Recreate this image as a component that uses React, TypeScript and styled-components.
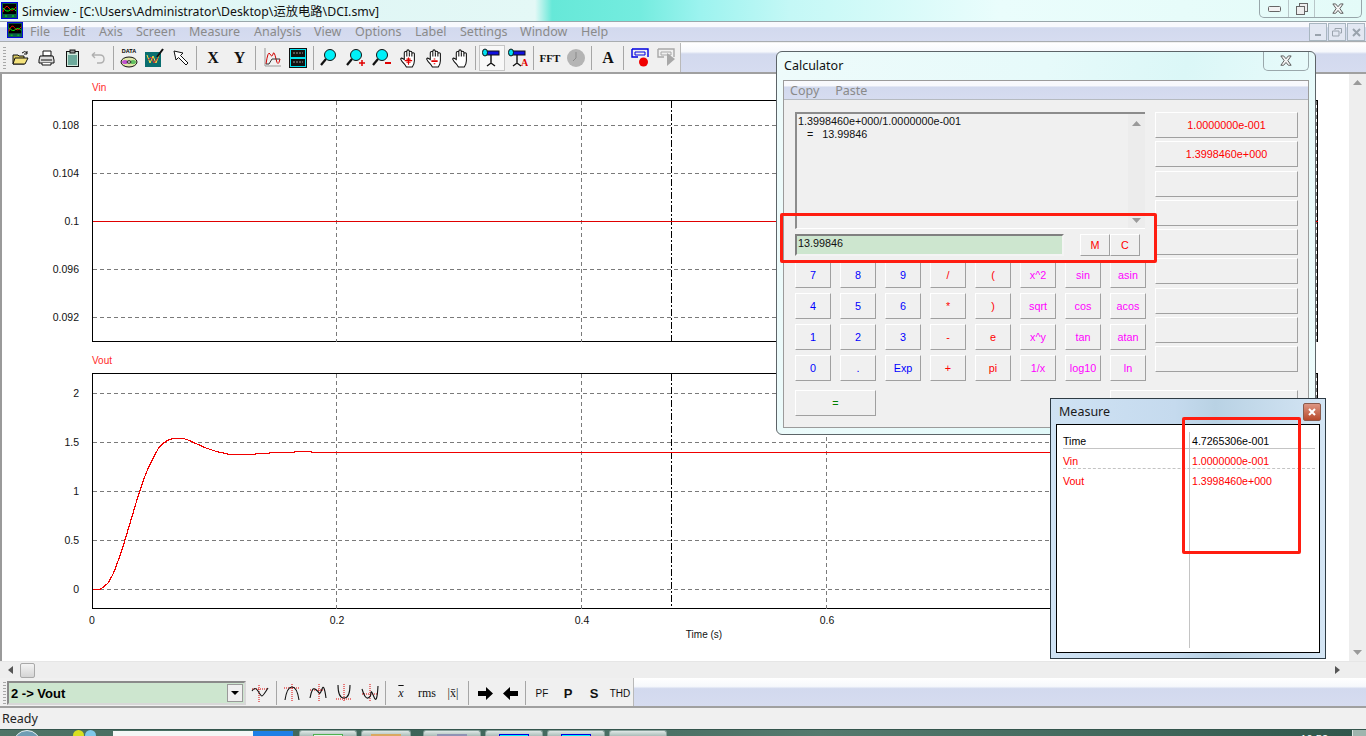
import React from "react";
import styled, { createGlobalStyle } from "styled-components";

const GlobalStyle = createGlobalStyle`
  html, body {
    margin: 0;
    padding: 0;
    overflow: hidden;
    background: #f0f0f0;
  }
  * {
    box-sizing: border-box;
  }
`;

const Page = styled.div`
  position: relative;
  width: 1366px;
  height: 736px;
  overflow: hidden;
  display: flex;
  flex-direction: column;
  background: #f0f0f0;
  font-family: "Liberation Sans", Arial, sans-serif;
  font-size: 11px;
`;

const TitleBar = styled.div`
  height: 22px;
  flex: none;
  display: flex;
  align-items: center;
  padding-left: 1px;
  gap: 4px;
  font-family: "Noto Sans", "Noto Sans CJK SC", sans-serif;
  font-size: 12.3px;
  color: #111;
  border-bottom: 1px solid #9aa7ab;
  background: linear-gradient(90deg, #e6f9f7 0, #dff6f5 300px, #e4f8f6 535px, #66e8d8 552px, #74ecdf 640px, #9cf3ef 700px, #c4f8f6 790px, #eafdfc 1000px, #e4fbf8 100%);
`;

const WindowButtons = styled.div`
  position: absolute;
  top: 0;
  right: 4px;
  width: 103px;
  height: 18px;
  display: grid;
  grid-template-columns: 28px 26px 1fr;
  border: 1px solid #98a6aa;
  border-top: 0;
  border-radius: 0 0 5px 5px;
  color: #444;
  > div {
    display: flex;
    align-items: center;
    justify-content: center;
  }
  > div + div {
    border-left: 1px solid #b8c6c8;
  }
`;

const MenuBar = styled.div`
  height: 20px;
  flex: none;
  display: flex;
  align-items: center;
  padding-left: 7px;
  font-family: "Noto Sans", sans-serif;
  font-size: 12.5px;
  color: #8a8a8a;
  border-bottom: 1px solid #a9adb0;
  background: linear-gradient(180deg, #f8f9fd 0%, #f8f9fd 25%, #d2d9ee 30%, #d6dcf0 100%);
`;

const MenuItem = styled.span<{ $w: number }>`
  width: ${(p) => p.$w}px;
  flex: none;
  white-space: nowrap;
`;

const MdiButtons = styled.div`
  margin-left: auto;
  display: flex;
  gap: 1px;
  padding-right: 1px;
`;

const MdiButton = styled.div`
  width: 18px;
  height: 18px;
  margin-top: 1px;
  border: 1px solid #a8b6c0;
  background: #e2e7f2;
  display: flex;
  align-items: center;
  justify-content: center;
`;

const BarStrip = styled.div`
  flex: none;
  display: flex;
  align-items: center;
  background: linear-gradient(180deg, #ffffff 0%, #f6f8fc 30%, #d2d9ee 38%, #d6dcf0 100%);
  border-bottom: 2px solid #a0a0a0;
`;

const ToolBar = styled(BarStrip)`
  height: 31px;
  margin-top: 1px;
`;

const ToolGroup = styled.div`
  height: 100%;
  display: flex;
  align-items: center;
  background: #f0f0f0;
  padding-left: 3px;
  border-right: 1px solid #b9b9b9;
`;

const BottomGroup = styled(ToolGroup)`
  padding-top: 2px;
`;

const Grip = styled.div`
  width: 3px;
  height: 22px;
  margin-right: 1px;
  flex: none;
  background: repeating-linear-gradient(180deg, #a8a8a8 0 1px, transparent 1px 3px);
`;

const ToolButton = styled.div<{ $w?: number; $pressed?: boolean }>`
  width: ${(p) => p.$w ?? 26}px;
  height: 26px;
  flex: none;
  display: flex;
  align-items: center;
  justify-content: center;
  color: #111;
  background: ${(p) => (p.$pressed ? "#f8f8f8" : "transparent")};
  border: ${(p) => (p.$pressed ? "1px solid #c6c6c6" : "1px solid transparent")};
`;

const ToolSep = styled.div<{ $wide?: boolean }>`
  width: 1px;
  height: 24px;
  margin: 0 ${(p) => (p.$wide ? 3 : 2)}px 0 2px;
  flex: none;
  background: #a6a6a6;
`;

const SerifGlyph = styled.span<{ $size?: number; $thin?: boolean; $italic?: boolean; $over?: boolean }>`
  font-family: "Liberation Serif", serif;
  font-weight: ${(p) => (p.$thin ? 400 : 700)};
  font-style: ${(p) => (p.$italic ? "italic" : "normal")};
  text-decoration: ${(p) => (p.$over ? "overline" : "none")};
  font-size: ${(p) => p.$size ?? 16}px;
  color: #111;
`;

const PlainGlyph = styled.span<{ $bold?: boolean; $size?: number }>`
  font-family: "Liberation Sans", sans-serif;
  font-size: ${(p) => p.$size ?? 10}px;
  font-weight: ${(p) => (p.$bold ? "bold" : "normal")};
  color: #111;
`;

const Workspace = styled.div`
  flex: none;
  height: 604px;
  display: grid;
  grid-template-columns: 1fr 17px;
  grid-template-rows: 587px 17px;
  border-left: 2px solid #9a9a9a;
`;

const Canvas = styled.div`
  background: #fff;
  overflow: hidden;
  min-width: 0;
`;

const VScroll = styled.div`
  display: flex;
  flex-direction: column;
  justify-content: space-between;
  align-items: center;
  background: #eeeeee;
  padding: 6px 0 6px;
`;

const HScroll = styled.div`
  grid-column: 1 / 3;
  display: flex;
  align-items: center;
  padding: 0 26px 0 8px;
  background: #eeeeee;
  border-top: 1px solid #e6e6e6;
  margin-left: -2px;
`;

const Thumb = styled.div`
  width: 15px;
  height: 15px;
  margin-left: 7px;
  border: 1px solid #a9a9a9;
  border-radius: 2px;
  background: linear-gradient(180deg, #f4f4f4, #d4d4d4);
`;

const BottomBar = styled(BarStrip)`
  height: 30px;
`;

const ComboBox = styled.div`
  width: 239px;
  height: 24px;
  flex: none;
  display: flex;
  align-items: center;
  justify-content: space-between;
  padding: 0 1px 0 2px;
  background: #cde6cf;
  border: 2px solid #8a8a8a;
  border-right-color: #d8d8d8;
  border-bottom-color: #d8d8d8;
  font-family: "Liberation Sans", sans-serif;
  font-weight: bold;
  font-size: 13px;
  color: #000;
`;

const ComboArrow = styled.div`
  width: 16px;
  height: 18px;
  background: #f0f0f0;
  border: 1px solid #9a9a9a;
  display: flex;
  align-items: center;
  justify-content: center;
`;

const StatusBar = styled.div`
  height: 21px;
  flex: none;
  display: flex;
  align-items: center;
  padding-left: 2px;
  font-family: "Noto Sans", sans-serif;
  font-size: 12.5px;
  color: #222;
  background: #f0f0f0;
`;

const TaskBar = styled.div`
  height: 7px;
  flex: none;
  display: flex;
  border-top: 1px solid #33544c;
  background: linear-gradient(90deg, #4f7467, #3c6458 30%, #557a6e 60%, #3f665a 85%, #2f564b 100%);
  overflow: hidden;
`;

const StartOrb = styled.div`
  width: 28px;
  height: 28px;
  margin-left: 13px;
  flex: none;
  border-radius: 50%;
  border: 1px solid #e4eef0;
  background: #6f9db4;
`;

const TrayDot = styled.div<{ $c: string; $ml: number }>`
  width: 11px;
  height: 11px;
  margin-left: ${(p) => p.$ml}px;
  flex: none;
  border-radius: 50%;
  background: ${(p) => p.$c};
`;

const SearchBox = styled.div`
  width: 180px;
  margin: 1px 0 0 17px;
  flex: none;
  background: linear-gradient(90deg, #f4f7f6 0, #f4f7f6 140px, #1e7fe6 140px, #1e7fe6 100%);
`;

const TaskItem = styled.div<{ $w: number; $ml: number }>`
  width: ${(p) => p.$w}px;
  margin-left: ${(p) => p.$ml}px;
  flex: none;
  display: flex;
  justify-content: center;
  background: linear-gradient(180deg, #dfe8e6, #a9bdb8);
  border: 1px solid #86a09a;
  border-bottom: 0;
  border-radius: 3px 3px 0 0;
`;

const TaskGlyph = styled.div<{ $c: string; $edge?: string }>`
  width: 30px;
  margin-top: 3px;
  background: ${(p) => p.$c};
  border: 1px solid ${(p) => p.$edge ?? "transparent"};
  border-bottom: 0;
`;

const TrayClock = styled.div`
  margin-left: auto;
  padding-top: 3px;
  flex: none;
  font-size: 11px;
  line-height: 13px;
  color: #fff;
`;

const ShowDesktop = styled.div`
  width: 14px;
  margin-left: 24px;
  flex: none;
  background: #9fb5ae;
  border-left: 1px solid #dbe6e3;
`;

const Calculator = styled.div`
  position: absolute;
  left: 776px;
  top: 51px;
  width: 540px;
  height: 384px;
  border: 1px solid #5d6468;
  border-radius: 6px 6px 0 6px;
  background: linear-gradient(100deg, #eefbfb 0%, #e6fafa 45%, #dbf7f7 68%, #eefcfc 100%);
  padding: 0 6px 6px 6px;
  display: flex;
  flex-direction: column;
`;

const CalcTitle = styled.div`
  height: 28px;
  flex: none;
  display: flex;
  align-items: center;
  justify-content: space-between;
  font-family: "Noto Sans", sans-serif;
  font-size: 12.5px;
  color: #111;
  padding: 0 0 2px 1px;
`;

const CalcClose = styled.div`
  width: 46px;
  height: 19px;
  align-self: flex-start;
  display: flex;
  align-items: center;
  justify-content: center;
  border: 1px solid #9aa7ab;
  border-top: 0;
  border-radius: 0 0 5px 5px;
`;

const CalcBody = styled.div`
  flex: 1;
  border: 1px solid #9b9b9b;
  background: #f0f0f0;
  display: flex;
  flex-direction: column;
`;

const CalcMenu = styled.div`
  height: 19px;
  flex: none;
  display: flex;
  align-items: center;
  gap: 16px;
  padding-left: 6px;
  font-family: "Noto Sans", sans-serif;
  font-size: 12.5px;
  color: #8a8a8a;
  border-bottom: 1px solid #b5bac0;
  background: linear-gradient(180deg, #f8f9fd 0%, #f8f9fd 25%, #d2d9ee 35%, #d6dcf0 100%);
`;

const CalcColumns = styled.div`
  flex: 1;
  display: grid;
  grid-template-columns: 351px 143px;
  column-gap: 9px;
  align-content: start;
  padding: 12px 0 0 11px;
`;

const CalcLeft = styled.div`
  display: flex;
  flex-direction: column;
`;

const OutputBox = styled.div`
  width: 350px;
  height: 117px;
  display: flex;
  justify-content: space-between;
  border: 2px solid #8c8c8c;
  border-right: 0;
  border-bottom: 1px solid #fff;
  padding: 1px 0 0 1px;
  line-height: 13px;
  font-size: 10.8px;
  color: #111;
  white-space: pre;
`;

const OutputScroll = styled.div`
  width: 17px;
  display: flex;
  flex-direction: column;
  align-items: center;
  justify-content: space-between;
  padding: 7px 0 5px;
  background: #ececec;
  margin-top: -1px;
`;

const EntryRow = styled.div`
  height: 22px;
  margin-top: 5px;
  display: flex;
  align-items: center;
`;

const EntryField = styled.div`
  width: 269px;
  height: 22px;
  flex: none;
  border: 2px solid #808080;
  border-right-color: #f4f4f4;
  border-bottom-color: #f4f4f4;
  background: #cde6cf;
  padding-left: 1px;
  line-height: 15px;
  font-size: 10.8px;
  color: #111;
`;

const CalcButton = styled.div<{ $color?: string }>`
  display: flex;
  align-items: center;
  justify-content: center;
  background: #f0f0f0;
  border: 1px solid #a0a0a0;
  border-top-color: #fff;
  border-left-color: #fff;
  color: ${(p) => p.$color ?? "#ff0000"};
  font-size: 10.8px;
`;

const MemoryButtons = styled.div`
  display: flex;
  margin-left: 16px;
  ${CalcButton} {
    width: 30px;
    height: 22px;
  }
`;

const KeyGrid = styled.div`
  margin-top: 6px;
  display: grid;
  grid-template-columns: repeat(8, 36px);
  grid-auto-rows: 26px;
  column-gap: 9px;
  row-gap: 5px;
`;

const CalcRight = styled.div`
  display: flex;
  flex-direction: column;
  gap: 3.25px;
  ${CalcButton} {
    height: 26px;
  }
`;

const CalcFooter = styled.div`
  grid-column: 1 / 3;
  margin-top: 9px;
  display: flex;
  justify-content: space-between;
  ${CalcButton} {
    height: 26px;
  }
`;

const EqualsButton = styled(CalcButton)`
  width: 81px;
`;

const WideButton = styled(CalcButton)`
  width: 188px;
`;

const MeasureWindow = styled.div`
  position: absolute;
  left: 1050px;
  top: 398px;
  width: 276px;
  height: 261px;
  border: 1px solid #2e3b44;
  background: linear-gradient(90deg, #cfe2f3 0%, #c5daee 45%, #b9d2e4 60%, #d4e5f4 100%);
  padding: 0 5px 5px 5px;
  display: flex;
  flex-direction: column;
`;

const MeasureTitle = styled.div`
  height: 25px;
  flex: none;
  display: flex;
  align-items: center;
  justify-content: space-between;
  font-family: "Noto Sans", sans-serif;
  font-size: 12.5px;
  color: #1a1a1a;
  padding-left: 3px;
`;

const MeasureClose = styled.div`
  width: 18px;
  height: 18px;
  margin-right: -1px;
  display: flex;
  align-items: center;
  justify-content: center;
  border: 1px solid #8a5a4c;
  border-radius: 2px;
  background: linear-gradient(180deg, #dd9683, #b84a2c);
`;

const MeasureBody = styled.div`
  flex: 1;
  position: relative;
  background: #fff;
  border: 1px solid #000;
  padding: 4px 4px 0 6px;
`;

const MeasureDivider = styled.div`
  position: absolute;
  left: 132px;
  top: 7px;
  bottom: 4px;
  width: 1px;
  background: #c4c4c4;
`;

const MeasureRow = styled.div<{ $color: string; $line?: string }>`
  height: 20px;
  display: grid;
  grid-template-columns: 129px 1fr;
  align-items: center;
  font-size: 10.6px;
  color: ${(p) => p.$color};
  padding-top: 4px;
  border-bottom: ${(p) => p.$line ?? "0"};
`;

const Highlight = styled.div`
  position: absolute;
  border: 3px solid #ff1d10;
  border-radius: 2px;
  pointer-events: none;
`;

const EntryHighlight = styled(Highlight)`
  left: 780px;
  top: 213px;
  width: 377px;
  height: 50px;
`;

const ValueHighlight = styled(Highlight)`
  left: 1182px;
  top: 417px;
  width: 119px;
  height: 137px;
`;

const tickStyle = { fontFamily: "'Liberation Sans', sans-serif", fontSize: 10.5, fill: "#111" };

const PLOT_L = 90.5;
const PLOT_R = 1315.5;

// step response read off the picture, in px from the plot's top left corner
const voutPoints = [
  [0, 215.7], [7.7, 215.7], [11, 213.7], [16, 209], [21, 199.7], [26, 186.3], [31, 171.3], [36, 154.7], [41, 138],
  [46, 121.3], [51, 106.3], [56, 93.7], [61, 83.7], [66, 74.7], [71, 69.7], [76, 66.3], [81, 65], [91, 65],
  [96, 66.7], [104, 70.3], [114, 74.7], [124, 78], [136, 80.7], [163, 80.7], [164, 80], [176, 80], [178, 79],
  [201, 79], [203, 78], [218, 78], [219, 78.7], [1225, 78.7],
];

function Plot({ y, h, label, ticks, line }: { y: number; h: number; label: string; ticks: { t: string; y: number }[]; line: React.ReactNode }) {
  return (
    <g>
      <text x={90} y={y - 10} style={{ ...tickStyle, fontSize: 10, fill: "#ff2a2a" }}>{label}</text>
      <rect x={PLOT_L} y={y} width={PLOT_R - PLOT_L} height={h} fill="#fff" stroke="#000" strokeWidth={1} shapeRendering="crispEdges" />
      {ticks.map((k) => (
        <g key={k.t}>
          <line x1={PLOT_L} x2={PLOT_R} y1={y + k.y} y2={y + k.y} stroke="#7a7a7a" strokeDasharray="4 3" shapeRendering="crispEdges" />
          <text x={77} y={y + k.y + 3} textAnchor="end" style={tickStyle}>{k.t}</text>
        </g>
      ))}
      {[334.5, 579.5, 824.5, 1069.5, 1314.5].map((x) => (
        <line key={x} x1={x} x2={x} y1={y} y2={y + h} stroke="#7a7a7a" strokeDasharray="4 3" shapeRendering="crispEdges" />
      ))}
      <line x1={669.5} x2={669.5} y1={y} y2={y + h} stroke="#000" strokeDasharray="7 2 2 2" shapeRendering="crispEdges" />
      {line}
    </g>
  );
}

function Charts() {
  const pts = voutPoints.map(([x, py]) => `${PLOT_L + x},${299.5 + py}`).join(" ");
  return (
    <svg width="1366" height="587" style={{ display: "block" }}>
      <Plot
        y={26.5}
        h={241}
        label="Vin"
        ticks={[{ t: "0.108", y: 25 }, { t: "0.104", y: 73 }, { t: "0.1", y: 121 }, { t: "0.096", y: 169 }, { t: "0.092", y: 217 }]}
        line={<line x1={PLOT_L} x2={PLOT_R} y1={147.5} y2={147.5} stroke="#e00000" shapeRendering="crispEdges" />}
      />
      <Plot
        y={299.5}
        h={235}
        label="Vout"
        ticks={[{ t: "2", y: 20 }, { t: "1.5", y: 69 }, { t: "1", y: 118 }, { t: "0.5", y: 167 }, { t: "0", y: 216 }]}
        line={<polyline points={pts} fill="none" stroke="#f00000" strokeWidth={1.2} shapeRendering="crispEdges" />}
      />
      {[["0", 90], ["0.2", 335], ["0.4", 580], ["0.6", 825]].map(([t, x]) => (
        <text key={t} x={x} y={550} textAnchor="middle" style={tickStyle}>{t}</text>
      ))}
      <text x={702} y={564} textAnchor="middle" style={{ ...tickStyle, fontSize: 10 }}>Time (s)</text>
    </svg>
  );
}

function AppIcon({ size = 17 }: { size?: number }) {
  return (
    <svg width={size} height={size} viewBox="0 0 17 17">
      <rect x="0.5" y="0.5" width="16" height="16" fill="#0a5c4a" stroke="#0000e0" />
      <rect x="2" y="2" width="13" height="10" fill="#000" />
      <path d="M2 10 Q5 1 8 6 T15 5" fill="none" stroke="#f00" />
      <path d="M2 6 Q6 11 9 8 T15 9" fill="none" stroke="#0f0" />
      <path d="M4 14h2M11 14h2" stroke="#0f0" />
    </svg>
  );
}

const Folder = () => (
  <svg width="17" height="16" viewBox="0 0 17 16">
    <path d="M1 5h5l1 1h5v8H1z" fill="#d8c860" stroke="#111" />
    <path d="M3 8h13l-3 6H1z" fill="#f4e27c" stroke="#111" />
    <path d="M10 3q3-3 5 0M15 1v3h-3" fill="none" stroke="#111" />
  </svg>
);
const Printer = () => (
  <svg width="17" height="16" viewBox="0 0 17 16">
    <path d="M5 1h8v5H5z" fill="#fff" stroke="#111" />
    <path d="M2 6h13l1 4v3H1v-3z" fill="#ddd" stroke="#111" />
    <path d="M3 10h11M4 13v2h9v-2" fill="#fff" stroke="#111" />
  </svg>
);
const Clipboard = () => (
  <svg width="15" height="18" viewBox="0 0 15 18">
    <rect x="1.5" y="2.5" width="12" height="15" fill="#cfe8dc" stroke="#111" />
    <rect x="5" y="1" width="5" height="3" fill="#999" stroke="#111" />
    <path d="M3 7h9M3 9h9M3 11h9M3 13h9M3 15h9" stroke="#0a6a5a" />
  </svg>
);
const Undo = () => (
  <svg width="14" height="12" viewBox="0 0 14 12">
    <path d="M1 3h8q4 0 4 4t-4 4H6M1 3l3-2.500M1 3l3 3" fill="none" stroke="#b0b0b0" strokeWidth="1.400" />
  </svg>
);
const DataDisc = () => (
  <svg width="20" height="22" viewBox="0 0 20 22">
    <text x="10" y="6" textAnchor="middle" style={{ fontFamily: "'Liberation Sans', sans-serif", fontSize: 5.5, fontWeight: 700 }}>DATA</text>
    <ellipse cx="10" cy="15" rx="8" ry="5" fill="#dfe8a8" stroke="#111" />
    <ellipse cx="6" cy="15" rx="3" ry="2" fill="#c050d0" />
    <ellipse cx="14" cy="15" rx="3" ry="2" fill="#60c060" />
    <ellipse cx="10" cy="15" rx="2" ry="1.200" fill="#fff" stroke="#111" />
  </svg>
);
const ScopeEdit = () => (
  <svg width="20" height="20" viewBox="0 0 20 20">
    <rect x="0" y="4" width="16" height="15" fill="#0a6e70" />
    <path d="M2 7l3 8 3-7 3 7 3-8" fill="none" stroke="#ffe040" />
    <path d="M3 12l3-3 3 6 4-5" fill="none" stroke="#e03030" />
    <path d="M12 9l6-8" stroke="#111" strokeWidth="2" />
  </svg>
);
const Arrow = () => (
  <svg width="16" height="16" viewBox="0 0 16 16">
    <path d="M1 1l9 2-2.500 2.500L15 13l-2 2-7.500-7.500L3 10z" fill="#fff" stroke="#111" />
  </svg>
);
const PlotIcon = () => (
  <svg width="20" height="21" viewBox="0 0 20 21">
    <path d="M3 1v18h16" fill="none" stroke="#999" />
    <path d="M4 17q2-14 4-10t3 0 3 5 4 0" fill="none" stroke="#d00000" />
    <path d="M4 17h3l3-5 8 0" fill="none" stroke="#333" />
  </svg>
);
const Meter = () => (
  <svg width="18" height="20" viewBox="0 0 18 20">
    <rect x="0.500" y="0.500" width="17" height="19" fill="#00e0f0" stroke="#111" />
    <rect x="2" y="2" width="14" height="7" fill="#111" />
    <rect x="2" y="11" width="14" height="7" fill="#111" />
    <path d="M4 5h10M4 14h10" stroke="#999" strokeDasharray="2 1" />
  </svg>
);
const Zoom = ({ mark }: { mark?: "+" | "-" }) => (
  <svg width="20" height="19" viewBox="0 0 20 19">
    <circle cx="10" cy="7" r="5.500" fill="#00f0f8" stroke="#111" />
    <path d="M6 11l-5 6" stroke="#111" strokeWidth="2.200" />
    {mark === "+" && <path d="M13 15h6M16 12v6" stroke="#e00000" strokeWidth="1.500" />}
    {mark === "-" && <path d="M13 15h6" stroke="#e00000" strokeWidth="2" />}
  </svg>
);
const Hand = ({ mark }: { mark?: "+" | "-" }) => (
  <svg width="19" height="20" viewBox="0 0 18 19">
    <path
      d="M5 11V4.500a1.200 1.200 0 0 1 2.400 0V3a1.200 1.200 0 0 1 2.400 0v1.200a1.200 1.200 0 0 1 2.400 0v1.600a1.200 1.200 0 0 1 2.400 0V12q0 3-2 6H7q-1-2-4-5l-1.500-2.500q.5-1.500 2-.5z"
      fill="#fff"
      stroke="#111"
    />
    <path d="M7.400 4.500V8M9.800 4.200V8M12.200 5.800V8" stroke="#111" fill="none" />
    {mark === "+" && <path d="M5.500 12h7M9 9v7M7 10.500h4M7 13.500h4" stroke="#e00000" strokeWidth="1.100" />}
    {mark === "-" && <path d="M6 12.500h6M9 10v1M9 14.500v1" stroke="#e00000" strokeWidth="1.500" />}
  </svg>
);
const Probe = ({ a }: { a?: boolean }) => (
  <svg width="20" height="21" viewBox="0 0 20 21">
    <rect x="3" y="4" width="14" height="4" fill="#1010e0" stroke="#111" />
    <ellipse cx="3" cy="5.500" rx="2.500" ry="3.500" fill="#00e0f0" stroke="#111" />
    <path d="M9 8v9M5 19l4-3 4 3" fill="none" stroke="#111" strokeWidth="1.400" />
    {a && <text x="13" y="19" style={{ fontFamily: "'Liberation Serif', serif", fontSize: 10, fontWeight: 700, fill: "#e00000" }}>A</text>}
  </svg>
);
const Clock = () => (
  <svg width="20" height="20" viewBox="0 0 20 20">
    <circle cx="10" cy="10" r="9" fill="#b4b4b4" />
    <path d="M10 10V4M10 10l-3 3" stroke="#8a8a8a" />
  </svg>
);
const Record = ({ off }: { off?: boolean }) => {
  const c = off ? "#a8a8a8" : "#0000e0";
  return (
    <svg width="20" height="20" viewBox="0 0 20 20">
      <path d="M1 1h16v8M1 1v8h6" fill="none" stroke={c} strokeWidth="1.400" />
      <path d="M4 4h10v3H4z" fill="none" stroke={c} />
      {off ? <path d="M10 5l8 6-8 7z" fill="#a8a8a8" /> : <circle cx="12.500" cy="14" r="4.500" fill="#f00000" />}
    </svg>
  );
};

const Wave = ({ d, marks }: { d: string; marks: string }) => (
  <svg width="18" height="20" viewBox="0 0 18 20">
    <path d={marks} fill="none" stroke="#e00000" strokeDasharray="1 1" />
    <path d={d} fill="none" stroke="#111" strokeWidth="1.100" />
  </svg>
);

const BigArrow = ({ left }: { left?: boolean }) => (
  <svg width="15" height="13" viewBox="0 0 15 13">
    <path d={left ? "M15 4H7V0L0 6.500 7 13V9h8z" : "M0 4h8V0l7 6.500L8 13V9H0z"} fill="#000" />
  </svg>
);

const TriUp = () => (
  <svg width="9" height="5" viewBox="0 0 9 5"><path d="M4.500 0L9 5H0z" fill="#9a9a9a" /></svg>
);
const TriDown = () => (
  <svg width="9" height="5" viewBox="0 0 9 5"><path d="M0 0h9L4.500 5z" fill="#9a9a9a" /></svg>
);

const XGlyph = ({ size = 14 }: { size?: number }) => (
  <svg width={size} height={size * 0.8} viewBox="0 0 15 12">
    <path d="M2 1h3l2.500 3L10 1h3l-3.500 5 3.500 5h-3L7.500 8 5 11H2l3.500-5z" fill="#f4f4f4" stroke="#555" />
  </svg>
);

const keys: [string, string][] = [
  ["7", "#0000ff"], ["8", "#0000ff"], ["9", "#0000ff"], ["/", "#ff0000"], ["(", "#ff0000"], ["x^2", "#ff00ff"], ["sin", "#ff00ff"], ["asin", "#ff00ff"],
  ["4", "#0000ff"], ["5", "#0000ff"], ["6", "#0000ff"], ["*", "#ff0000"], [")", "#ff0000"], ["sqrt", "#ff00ff"], ["cos", "#ff00ff"], ["acos", "#ff00ff"],
  ["1", "#0000ff"], ["2", "#0000ff"], ["3", "#0000ff"], ["-", "#ff0000"], ["e", "#ff0000"], ["x^y", "#ff00ff"], ["tan", "#ff00ff"], ["atan", "#ff00ff"],
  ["0", "#0000ff"], [".", "#0000ff"], ["Exp", "#0000ff"], ["+", "#ff0000"], ["pi", "#ff0000"], ["1/x", "#ff00ff"], ["log10", "#ff00ff"], ["ln", "#ff00ff"],
];

const memoryValues = ["1.0000000e-001", "1.3998460e+000", "", "", "", "", "", "", ""];

const menus: [string, number][] = [
  ["File", 33], ["Edit", 36], ["Axis", 37], ["Screen", 53], ["Measure", 65], ["Analysis", 60], ["View", 41], ["Options", 60],
  ["Label", 45], ["Settings", 60], ["Window", 61], ["Help", 40],
];

export default function App() {
  return (
    <Page>
      <GlobalStyle />
      <TitleBar>
        <AppIcon />
        <span>Simview - [C:\Users\Administrator\Desktop\运放电路\DCI.smv]</span>
      </TitleBar>
      <WindowButtons>
        <div>
          <svg width="13" height="6" viewBox="0 0 13 6"><rect x="0.500" y="0.500" width="12" height="5" rx="1" fill="#f2f2f2" stroke="#666" /></svg>
        </div>
        <div>
          <svg width="12" height="12" viewBox="0 0 12 12"><rect x="3.500" y="0.500" width="8" height="8" fill="#eee" stroke="#666" /><rect x="0.500" y="3.500" width="8" height="8" fill="#eee" stroke="#666" /></svg>
        </div>
        <div><XGlyph /></div>
      </WindowButtons>

      <MenuBar>
        <MenuItem $w={23}><AppIcon size={16} /></MenuItem>
        {menus.map(([m, w]) => <MenuItem key={m} $w={w}>{m}</MenuItem>)}
        <MdiButtons>
          <MdiButton><svg width="8" height="8" viewBox="0 0 8 8"><path d="M1 7h6" stroke="#9aa3ad" strokeWidth="2" /></svg></MdiButton>
          <MdiButton><svg width="10" height="9" viewBox="0 0 10 9"><path d="M3 2V.5h6.500V5H8M.5 3h6.500v5H.5z" fill="none" stroke="#9aa3ad" /></svg></MdiButton>
          <MdiButton><svg width="9" height="9" viewBox="0 0 9 9"><path d="M1 1l7 7M8 1L1 8" stroke="#9aa3ad" strokeWidth="2" /></svg></MdiButton>
        </MdiButtons>
      </MenuBar>

      <ToolBar>
        <ToolGroup>
          <Grip />
          <ToolButton><Folder /></ToolButton>
          <ToolButton><Printer /></ToolButton>
          <ToolButton><Clipboard /></ToolButton>
          <ToolButton><Undo /></ToolButton>
          <ToolSep />
          <ToolButton><DataDisc /></ToolButton>
          <ToolButton><ScopeEdit /></ToolButton>
          <ToolButton><Arrow /></ToolButton>
          <ToolSep $wide />
          <ToolButton><SerifGlyph>X</SerifGlyph></ToolButton>
          <ToolButton $w={27}><SerifGlyph>Y</SerifGlyph></ToolButton>
          <ToolSep $wide />
          <ToolButton><PlotIcon /></ToolButton>
          <ToolButton><Meter /></ToolButton>
          <ToolSep $wide />
          <ToolButton><Zoom /></ToolButton>
          <ToolButton><Zoom mark="+" /></ToolButton>
          <ToolButton><Zoom mark="-" /></ToolButton>
          <ToolButton><Hand mark="+" /></ToolButton>
          <ToolButton><Hand mark="-" /></ToolButton>
          <ToolButton><Hand /></ToolButton>
          <ToolSep $wide />
          <ToolButton $pressed><Probe /></ToolButton>
          <ToolButton><Probe a /></ToolButton>
          <ToolSep $wide />
          <ToolButton><SerifGlyph $size={11}>FFT</SerifGlyph></ToolButton>
          <ToolButton><Clock /></ToolButton>
          <ToolSep $wide />
          <ToolButton><SerifGlyph>A</SerifGlyph></ToolButton>
          <ToolSep $wide />
          <ToolButton $w={27}><Record /></ToolButton>
          <ToolButton><Record off /></ToolButton>
        </ToolGroup>
      </ToolBar>

      <Workspace>
        <Canvas><Charts /></Canvas>
        <VScroll><TriUp /><TriDown /></VScroll>
        <HScroll>
          <svg width="5" height="8" viewBox="0 0 5 8"><path d="M5 0v8L0 4z" fill="#555" /></svg>
          <Thumb />
          <svg width="5" height="8" viewBox="0 0 5 8" style={{ marginLeft: "auto" }}><path d="M0 0v8l5-4z" fill="#555" /></svg>
        </HScroll>
      </Workspace>

      <BottomBar>
        <BottomGroup>
          <Grip />
          <ComboBox>
            2 -&gt; Vout
            <ComboArrow><svg width="8" height="4" viewBox="0 0 8 4"><path d="M0 0h8L4 4z" fill="#000" /></svg></ComboArrow>
          </ComboBox>
          <ToolButton $w={28}><Wave d="M1 8q3-5 6 0t4 5 6-8" marks="M1 6h16M8 2v17" /></ToolButton>
          <ToolSep />
          <ToolButton><Wave d="M2 17Q4 4 9 4t7 13" marks="M1 5h16M9 1v18" /></ToolButton>
          <ToolButton><Wave d="M1 15Q3 4 6 6t4 4 3-4 4 9" marks="M1 7h16M10 1v18" /></ToolButton>
          <ToolButton><Wave d="M3 2q0 13 6 13t6-13" marks="M1 16h16M9 1v18" /></ToolButton>
          <ToolButton><Wave d="M1 6q3 10 6 9t3-5 3 4 4-11" marks="M1 11h16M9 1v18" /></ToolButton>
          <ToolSep />
          <ToolButton><SerifGlyph $size={12} $thin $italic $over>x</SerifGlyph></ToolButton>
          <ToolButton><SerifGlyph $size={12} $thin>rms</SerifGlyph></ToolButton>
          <ToolButton><SerifGlyph $size={12} $thin>|x̄|</SerifGlyph></ToolButton>
          <ToolSep $wide />
          <ToolButton $w={26}><BigArrow /></ToolButton>
          <ToolButton $w={25}><BigArrow left /></ToolButton>
          <ToolSep $wide />
          <ToolButton><PlainGlyph>PF</PlainGlyph></ToolButton>
          <ToolButton><PlainGlyph $bold $size={13}>P</PlainGlyph></ToolButton>
          <ToolButton><PlainGlyph $bold $size={13}>S</PlainGlyph></ToolButton>
          <ToolButton><PlainGlyph>THD</PlainGlyph></ToolButton>
        </BottomGroup>
      </BottomBar>

      <StatusBar>Ready</StatusBar>

      <TaskBar>
        <StartOrb />
        <TrayDot $c="#d8e020" $ml={32} />
        <TrayDot $c="#7fc8ea" $ml={1} />
        <SearchBox />
        <TaskItem $w={58} $ml={6}><TaskGlyph $c="#e8f0e8" $edge="#4fb04f" /></TaskItem>
        <TaskItem $w={50} $ml={4}><TaskGlyph $c="#d9a860" /></TaskItem>
        <TaskItem $w={58} $ml={12}><TaskGlyph $c="#8f93b4" /></TaskItem>
        <TaskItem $w={58} $ml={4}><TaskGlyph $c="#00f0f8" $edge="#0000e0" /></TaskItem>
        <TaskItem $w={58} $ml={4}><TaskGlyph $c="#00f0f8" $edge="#0000e0" /></TaskItem>
        <TaskItem $w={58} $ml={4} />
        <TrayClock>10:52</TrayClock>
        <ShowDesktop />
      </TaskBar>

      <Calculator>
        <CalcTitle>
          Calculator
          <CalcClose><XGlyph /></CalcClose>
        </CalcTitle>
        <CalcBody>
          <CalcMenu><span>Copy</span><span>Paste</span></CalcMenu>
          <CalcColumns>
            <CalcLeft>
              <OutputBox>
                {"1.3998460e+000/1.0000000e-001\n   =   13.99846"}
                <OutputScroll><TriUp /><TriDown /></OutputScroll>
              </OutputBox>
              <EntryRow>
                <EntryField>13.99846</EntryField>
                <MemoryButtons>
                  <CalcButton>M</CalcButton>
                  <CalcButton>C</CalcButton>
                </MemoryButtons>
              </EntryRow>
              <KeyGrid>
                {keys.map(([k, c]) => <CalcButton key={k} $color={c}>{k}</CalcButton>)}
              </KeyGrid>
            </CalcLeft>
            <CalcRight>
              {memoryValues.map((v, i) => <CalcButton key={i}>{v}</CalcButton>)}
            </CalcRight>
            <CalcFooter>
              <EqualsButton $color="#008000">=</EqualsButton>
              <WideButton />
            </CalcFooter>
          </CalcColumns>
        </CalcBody>
      </Calculator>

      <MeasureWindow>
        <MeasureTitle>
          Measure
          <MeasureClose>
            <svg width="8" height="8" viewBox="0 0 8 8"><path d="M1 1l6 6M7 1L1 7" stroke="#fff" strokeWidth="2" /></svg>
          </MeasureClose>
        </MeasureTitle>
        <MeasureBody>
          <MeasureDivider />
          <MeasureRow $color="#000" $line="1px solid #c4c4c4"><span>Time</span><span>4.7265306e-001</span></MeasureRow>
          <MeasureRow $color="#ff0000" $line="1px dashed #c4c4c4"><span>Vin</span><span>1.0000000e-001</span></MeasureRow>
          <MeasureRow $color="#ff0000"><span>Vout</span><span>1.3998460e+000</span></MeasureRow>
        </MeasureBody>
      </MeasureWindow>

      <EntryHighlight />
      <ValueHighlight />
    </Page>
  );
}
